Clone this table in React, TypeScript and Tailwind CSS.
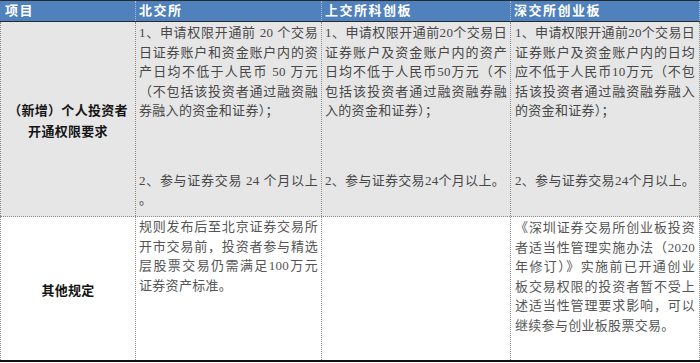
const serif = "font-['Liberation_Serif','Noto_Sans_CJK_SC',serif]";

type Para = { lines: string[]; className?: string };

function Paragraphs({ paras }: { paras: Para[] }) {
  return (
    <>
      {paras.map((p, pi) => (
        <div key={pi} className={p.className}>
          {p.lines.map((line, i) => (
            <div
              key={i}
              className={
                i < p.lines.length - 1
                  ? "leading-[19.5px] text-justify [text-align-last:justify]"
                  : "leading-[19.5px]"
              }
            >
              {line}
            </div>
          ))}
        </div>
      ))}
    </>
  );
}

const req2: Para[] = [
  {
    lines: [
      "1、申请权限开通前 20 个交易",
      "日证券账户和资金账户内的资",
      "产日均不低于人民币 50 万元",
      "（不包括该投资者通过融资融",
      "券融入的资金和证券）；",
    ],
  },
  { lines: ["2、参与证券交易 24 个月以上", "。"], className: "mt-[50px]" },
];

const req3: Para[] = [
  {
    lines: [
      "1、申请权限开通前20个交易日",
      "证券账户及资金账户内的资产",
      "日均不低于人民币50万元（不",
      "包括该投资者通过融资融券融",
      "入的资金和证券）；",
    ],
  },
  { lines: ["2、参与证券交易24个月以上。"], className: "mt-[50px]" },
];

const req4: Para[] = [
  {
    lines: [
      "1、申请权限开通前20个交易日",
      "证券账户及资金账户内的日均",
      "应不低于人民币10万元（不包",
      "括该投资者通过融资融券融入",
      "的资金和证券）；",
    ],
  },
  { lines: ["2、参与证券交易24个月以上。"], className: "mt-[50px]" },
];

const other2: Para[] = [
  {
    lines: [
      "规则发布后至北京证券交易所",
      "开市交易前，投资者参与精选",
      "层股票交易仍需满足100万元",
      "证券资产标准。",
    ],
  },
];

const other4: Para[] = [
  {
    lines: [
      "《深圳证券交易所创业板投资",
      "者适当性管理实施办法（2020",
      "年修订）》实施前已开通创业",
      "板交易权限的投资者暂不受上",
      "述适当性管理要求影响，可以",
      "继续参与创业板股票交易。",
    ],
  },
];

export default function App() {
  const cell = "border-l border-dotted border-[#8c8c8c] px-[3px]";
  return (
    <div className={`w-[700px] h-[363px] bg-white ${serif}`}>
      {/* Header */}
      <div className="grid grid-cols-[135px_186px_189px_190px] h-[22px] border-t border-[#2a2a2a] border-b border-b-[#2a2a2a] bg-[#4f81bd] text-white text-[13px] tracking-[1.5px] font-semibold leading-[20px]">
        <div className="pl-[5px]">项目</div>
        <div className="border-l border-dotted border-[#a8c0e0] pl-[3px]">北交所</div>
        <div className="border-l border-dotted border-[#a8c0e0] pl-[3px]">上交所科创板</div>
        <div className="border-l border-r border-dotted border-[#a8c0e0] pl-[3px]">深交所创业板</div>
      </div>

      {/* Row 1 */}
      <div className="grid grid-cols-[135px_186px_189px_190px] h-[195px] bg-[#e6e6e6] border-b border-dotted border-[#8c8c8c] text-[13px] tracking-[0.3px] text-[#474747]">
        <div className="border-l border-dotted border-[#8c8c8c] flex flex-col items-center justify-center pt-[3px] font-bold text-[#151515] leading-[21px]">
          <div>（新增）个人投资者</div>
          <div>开通权限要求</div>
        </div>
        <div className={`${cell} pt-[1px]`}>
          <Paragraphs paras={req2} />
        </div>
        <div className={`${cell} pt-[1px]`}>
          <Paragraphs paras={req3} />
        </div>
        <div className={`${cell} border-r pt-[1px] pr-[4px] pl-[4px]`}>
          <Paragraphs paras={req4} />
        </div>
      </div>

      {/* Row 2 */}
      <div className="grid grid-cols-[135px_186px_189px_190px] h-[145px] border-b-2 border-[#111] text-[13px] tracking-[0.3px] text-[#555]">
        <div className="border-l border-dotted border-[#8c8c8c] flex items-center justify-center pt-[4px] font-bold text-[#151515]">
          其他规定
        </div>
        <div className={`${cell} pt-[0px]`}>
          <Paragraphs paras={other2} />
        </div>
        <div className={cell}></div>
        <div className={`${cell} border-r pt-[1px] pr-[4px] pl-[4px]`}>
          <Paragraphs paras={other4} />
        </div>
      </div>
    </div>
  );
}
